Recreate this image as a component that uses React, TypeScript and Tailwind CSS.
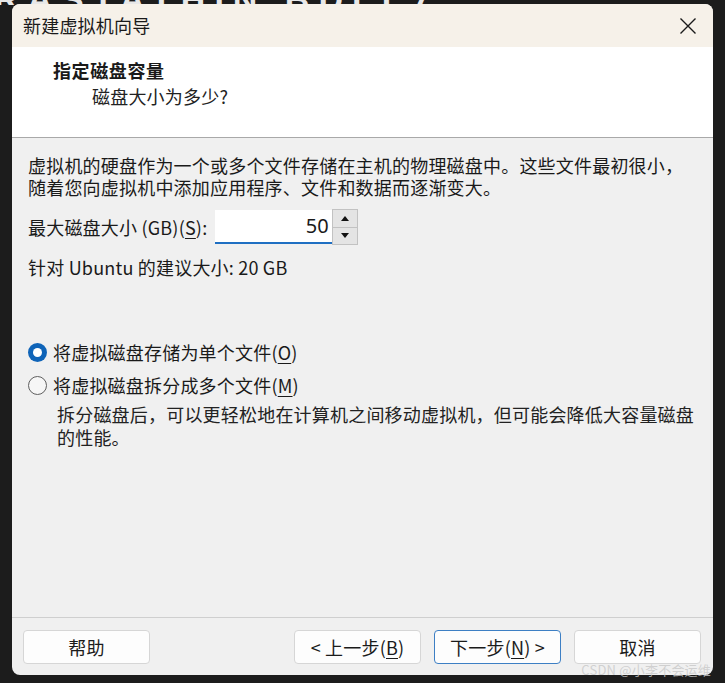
import React from 'react';

type BtnProps = {
  children: React.ReactNode;
  focused?: boolean;
};

// 快捷键字母下划线
function Key({ children }: { children: React.ReactNode }) {
  return <span className="underline underline-offset-[3px] decoration-1">{children}</span>;
}

function WizardButton({ children, focused }: BtnProps) {
  return (
    <button
      className={`w-[127px] h-[34px] rounded-[4px] bg-[#fdfdfd] border text-[18px] text-[#1b1b1b] flex items-center justify-center ${
        focused ? 'border-[#3d7fc4]' : 'border-[#d6d6d6]'
      }`}
    >
      {children}
    </button>
  );
}

function Radio({ checked, children }: { checked?: boolean; children: React.ReactNode }) {
  return (
    <label className="h-[33px] flex items-center gap-[6px]">
      {checked ? (
        <span className="w-[19px] h-[19px] rounded-full bg-[#0f64b8] flex items-center justify-center">
          <span className="w-[9px] h-[9px] rounded-full bg-white" />
        </span>
      ) : (
        <span className="w-[19px] h-[19px] rounded-full border border-[#5f5f5f] bg-[#f6f6f6]" />
      )}
      <span>{children}</span>
    </label>
  );
}

export default function App() {
  return (
    <div className="relative w-[725px] h-[683px] overflow-hidden bg-[#1c1c1c] pt-[4px] px-[12px] font-['Noto_Sans_CJK_SC',sans-serif] text-[#1a1a1a] tracking-[0.2px]">
      {/* 背后桌面上的文字残影，只露出窗口上方一条 */}
      <div className="absolute left-0 top-0 w-full h-[5px] overflow-hidden">
        <div className="-mt-[26px] -ml-[6px] text-[34px] font-bold tracking-[9px] text-[#e8e8e8] font-['Liberation_Sans',sans-serif] whitespace-nowrap">
          RASTATHIN BDLL7
        </div>
      </div>

      <div className="relative z-10 w-[701px] h-[671px] rounded-[8px] overflow-hidden flex flex-col bg-[#f0f0f0]">
        {/* 标题栏 */}
        <div className="h-[43px] bg-[#f6f1e9] flex items-center justify-between pl-[11px] pr-[16px]">
          <span className="text-[18px]">新建虚拟机向导</span>
          <svg width="18" height="18" viewBox="0 0 18 18" fill="none" stroke="#1a1a1a" strokeWidth="1.4">
            <path d="M1.5 1.5 L16.5 16.5 M16.5 1.5 L1.5 16.5" />
          </svg>
        </div>

        {/* 页头 */}
        <div className="h-[91px] bg-white border-b border-[#a9a9a9] pt-[11px] pl-[41px]">
          <div className="text-[18px] font-bold leading-[25px] tracking-[0.6px]">指定磁盘容量</div>
          <div className="text-[18px] leading-[25px] mt-[1px] pl-[39px] text-[#222]">磁盘大小为多少?</div>
        </div>

        {/* 内容 */}
        <div className="flex-1 pt-[16px] pl-[16px] text-[18px]">
          <p className="leading-[22px]">虚拟机的硬盘作为一个或多个文件存储在主机的物理磁盘中。这些文件最初很小，</p>
          <p className="leading-[22px]">随着您向虚拟机中添加应用程序、文件和数据而逐渐变大。</p>

          <div className="mt-[11px] flex items-center h-[36px]">
            <span className="w-[187px]">
              最大磁盘大小 (GB)(<Key>S</Key>):
            </span>
            <div className="w-[117px] h-[34px] bg-white border-b-2 border-[#1f6fc2] flex items-center justify-end pr-[3px] text-[20px] font-['Noto_Sans',sans-serif]">
              50
            </div>
            <div className="w-[26px] h-[36px] flex flex-col border border-[#c2c2c2] bg-[#e4e4e4]">
              <div className="flex-1 flex items-center justify-center border-b border-[#c2c2c2]">
                <svg width="8" height="5" viewBox="0 0 8 5">
                  <path d="M0 5 L4 0 L8 5 Z" fill="#111" />
                </svg>
              </div>
              <div className="flex-1 flex items-center justify-center">
                <svg width="8" height="5" viewBox="0 0 8 5">
                  <path d="M0 0 L8 0 L4 5 Z" fill="#111" />
                </svg>
              </div>
            </div>
          </div>

          <p className="mt-[11px] leading-[22px]">针对 Ubuntu 的建议大小: 20 GB</p>

          <div className="mt-[58px]">
            <Radio checked>
              将虚拟磁盘存储为单个文件(<Key>O</Key>)
            </Radio>
            <Radio>
              将虚拟磁盘拆分成多个文件(<Key>M</Key>)
            </Radio>
            <div className="pl-[29px] mt-[1px] leading-[23px] text-[#222]">
              <p>拆分磁盘后，可以更轻松地在计算机之间移动虚拟机，但可能会降低大容量磁盘</p>
              <p>的性能。</p>
            </div>
          </div>
        </div>

        {/* 底部按钮 */}
        <div className="h-[58px] border-t border-[#cfcfcf] flex items-start pt-[12px] pl-[11px] pr-[12px]">
          <WizardButton>帮助</WizardButton>
          <div className="flex-1" />
          <div className="flex gap-[13px]">
            <WizardButton>
              &lt; 上一步(<Key>B</Key>)
            </WizardButton>
            <WizardButton focused>
              下一步(<Key>N</Key>) &gt;
            </WizardButton>
            <WizardButton>取消</WizardButton>
          </div>
        </div>
      </div>

      {/* 水印 */}
      <div className="absolute z-20 right-[14px] bottom-[4px] text-[13px] text-[#c8c8c8]/80 whitespace-nowrap">
        CSDN @小李不会运维
      </div>
    </div>
  );
}
